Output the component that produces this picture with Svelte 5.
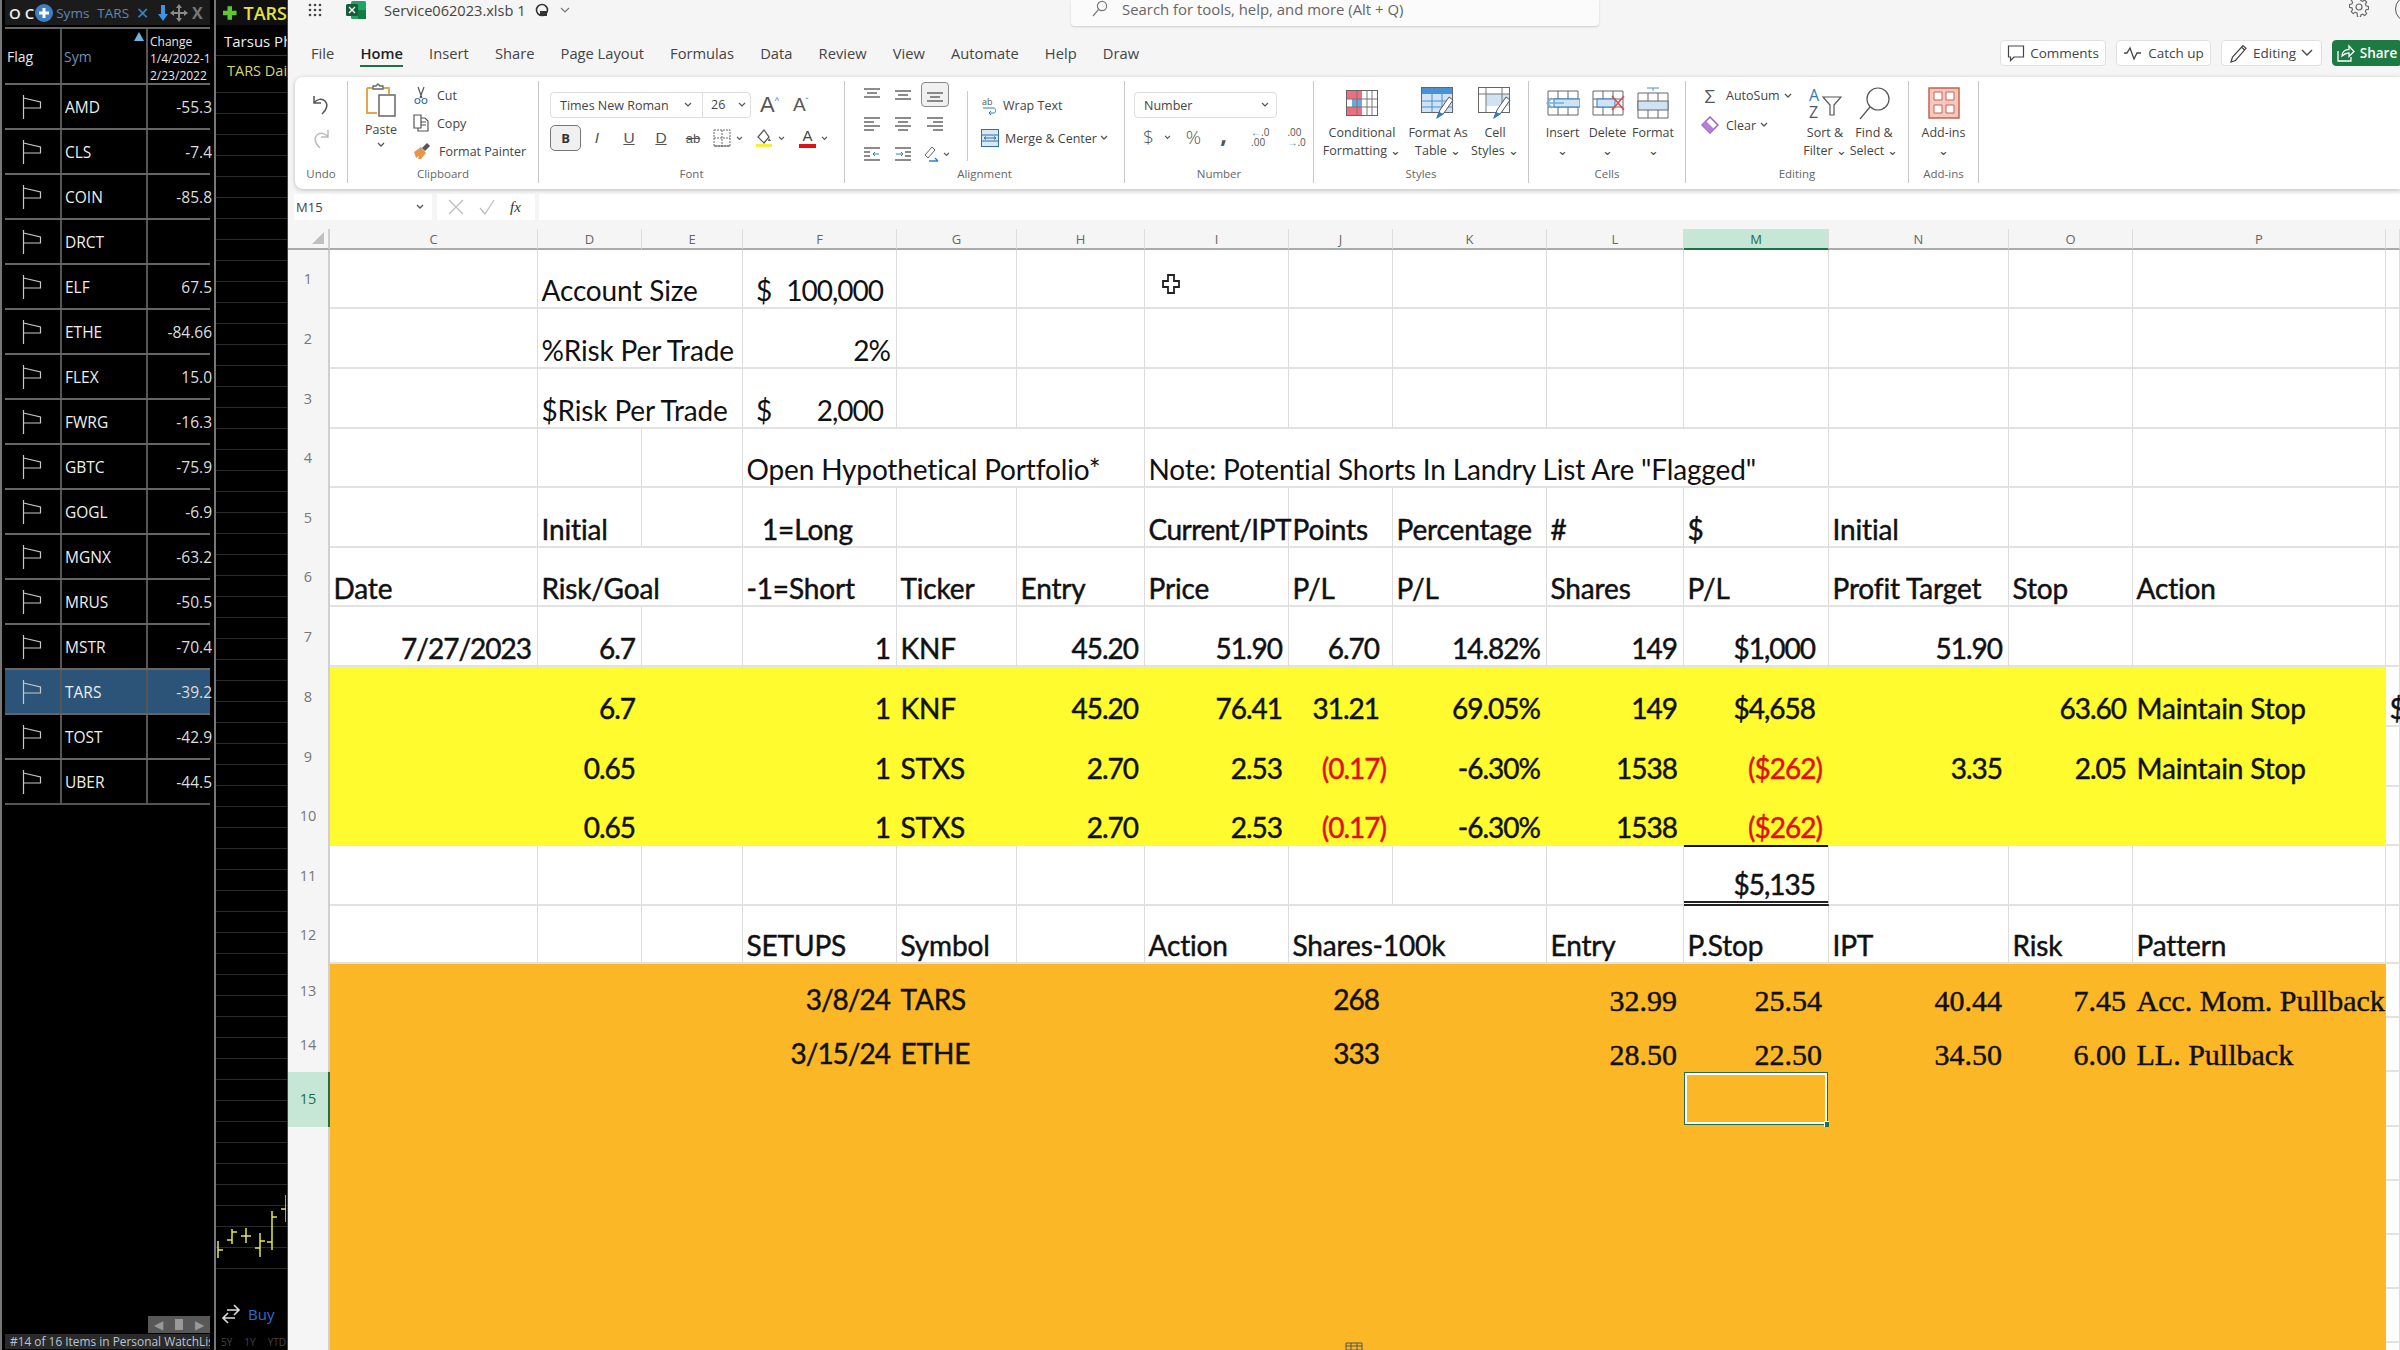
<script>
	const watch = [
		['AMD', '-55.3'], ['CLS', '-7.4'], ['COIN', '-85.8'], ['DRCT', ''],
		['ELF', '67.5'], ['ETHE', '-84.66'], ['FLEX', '15.0'], ['FWRG', '-16.3'],
		['GBTC', '-75.9'], ['GOGL', '-6.9'], ['MGNX', '-63.2'], ['MRUS', '-50.5'],
		['MSTR', '-70.4'], ['TARS', '-39.2'], ['TOST', '-42.9'], ['UBER', '-44.5']
	];
	const menu = ['File', 'Home', 'Insert', 'Share', 'Page Layout', 'Formulas', 'Data', 'Review', 'View', 'Automate', 'Help', 'Draw'];
	const cols = ['C', 'D', 'E', 'F', 'G', 'H', 'I', 'J', 'K', 'L', 'M', 'N', 'O', 'P', 'Q'];

	const L = (text, span = 1, cls = '') => ({ text, span, cls: 'left ' + cls });
	const R = (text, cls = '') => ({ text, span: 1, cls: 'right ' + cls });
	const A = (value) => ({ text: value, span: 1, cls: 'acc', dollar: true });

	const portfolio = (d, tick, entry, price, pts, pct, sh, pl, loss) => ({
		D: R(d), F: R('1'), G: L(tick), H: R(entry), I: R(price),
		J: R(pts, loss ? 'red' : 'pad'), K: R(pct), L: R(sh), M: R(pl, loss ? 'red' : 'pad')
	});

	const rows = [
		{ n: 1, cells: { D: L('Account Size', 2, 'thin'), F: A('100,000') } },
		{ n: 2, cells: { D: L('%Risk Per Trade', 2, 'thin'), F: R('2%', 'thin') } },
		{ n: 3, cells: { D: L('$Risk Per Trade', 2, 'thin'), F: A('2,000') } },
		{ n: 4, cells: { F: L('Open Hypothetical Portfolio*', 3, 'thin'), I: L('Note: Potential Shorts In Landry List Are "Flagged"', 5, 'thin') } },
		{ n: 5, cells: { D: L('Initial'), F: L('1=Long', 1, 'ind'), I: L('Current/IPT', 1, 'tight'), J: L('Points'), K: L('Percentage'), L: L('#'), M: L('$'), N: L('Initial') } },
		{ n: 6, cells: { C: L('Date'), D: L('Risk/Goal', 2), F: L('-1=Short'), G: L('Ticker'), H: L('Entry'), I: L('Price'), J: L('P/L'), K: L('P/L'), L: L('Shares'), M: L('P/L'), N: L('Profit Target'), O: L('Stop'), P: L('Action') } },
		{ n: 7, cells: { C: R('7/27/2023'), ...portfolio('6.7', 'KNF', '45.20', '51.90', '6.70', '14.82%', '149', '$1,000'), N: R('51.90') } },
		{ n: 8, fill: 'yellow', cells: { ...portfolio('6.7', 'KNF', '45.20', '76.41', '31.21', '69.05%', '149', '$4,658'), O: R('63.60'), P: L('Maintain Stop'), Q: L('$') } },
		{ n: 9, fill: 'yellow', cells: { ...portfolio('0.65', 'STXS', '2.70', '2.53', '(0.17)', '-6.30%', '1538', '($262)', true), N: R('3.35'), O: R('2.05'), P: L('Maintain Stop') } },
		{ n: 10, fill: 'yellow', cells: { ...portfolio('0.65', 'STXS', '2.70', '2.53', '(0.17)', '-6.30%', '1538', '($262)', true) } },
		{ n: 11, cells: { M: R('$5,135', 'pad total') } },
		{ n: 12, cells: { F: L('SETUPS'), G: L('Symbol'), I: L('Action'), J: L('Shares-100k', 2), L: L('Entry'), M: L('P.Stop'), N: L('IPT'), O: L('Risk'), P: L('Pattern') } },
		{ n: 13, fill: 'orange', cells: { F: R('3/8/24'), G: L('TARS'), J: R('268', 'pad'), L: R('32.99', 'tnr'), M: R('25.54', 'tnr'), N: R('40.44', 'tnr'), O: R('7.45', 'tnr'), P: L('Acc. Mom. Pullback', 1, 'tnr') } },
		{ n: 14, fill: 'orange', cells: { F: R('3/15/24'), G: L('ETHE'), J: R('333', 'pad'), L: R('28.50', 'tnr'), M: R('22.50', 'tnr'), N: R('34.50', 'tnr'), O: R('6.00', 'tnr'), P: L('LL. Pullback', 1, 'tnr') } },
		{ n: 15, fill: 'orange', cells: { M: { text: '', span: 1, cls: 'sel' } } },
		{ n: '', fill: 'orange', cells: {} },
		{ n: '', fill: 'orange', cells: {} },
		{ n: '', fill: 'orange', cells: {} },
		{ n: '', fill: 'orange', cells: {} },
		{ n: '', fill: 'orange', cells: {} }
	];

	function expand(row) {
		const out = [];
		let i = 0;
		while (i < cols.length) {
			const cell = row.cells[cols[i]] || { text: '', span: 1, cls: '' };
			out.push({ ...cell, col: cols[i], skin: cols[i] === 'Q' ? '' : row.fill || '' });
			i += cell.span;
		}
		return out;
	}
</script>

<div class="page">
	<aside class="watch">
		<div class="wtop">
			<span class="oc">O C</span>
			<svg width="20" height="20" viewBox="0 0 20 20"><circle cx="10" cy="10" r="9" fill="#3f7fc4" /><path d="M10 5v10M5 10h10" stroke="#fff" stroke-width="3" /></svg>
			<span class="syms">Syms</span>
			<span class="syms tk">TARS</span>
			<span class="xb">✕</span>
			<svg class="dn" width="10" height="18" viewBox="0 0 10 18"><path d="M3 1h4v9h3l-5 7-5-7h3z" fill="#3f93e0" /></svg>
			<svg class="mv" width="18" height="18" viewBox="0 0 18 18"><path d="M9 0l3 4h-2v4h4V6l4 3-4 3v-2h-4v4h2l-3 4-3-4h2v-4H4v2L0 9l4-3v2h4V4H6z" fill="#8a8a8a" /></svg>
			<span class="xg">X</span>
		</div>
		<div class="whead">
			<div class="wc hflag">Flag</div>
			<div class="wc hsym">Sym<i class="tri"></i></div>
			<div class="wc hchg">Change<br />1/4/2022-1<br />2/23/2022</div>
		</div>
		{#each watch as [sym, chg]}
			<div class="wrow" class:cur={sym === 'TARS'}>
				<div class="wc flag"><svg width="20" height="26" viewBox="0 0 20 26"><path d="M1.500 1v24M1.500 4l17 4v6h-17" fill="none" stroke="#c8c8c8" stroke-width="1.200" /></svg></div>
				<div class="wc sym">{sym}</div>
				<div class="wc val">{chg}</div>
			</div>
		{/each}
		<div class="wspace"></div>
		<div class="wscroll"><span class="sc">◀</span><span class="sq"></span><span class="sc">▶</span></div>
		<div class="wstatus">#14 of 16 Items in Personal WatchList</div>
	</aside>

	<aside class="chart">
		<div class="ctop"><svg width="18" height="18" viewBox="0 0 18 18"><path d="M6 0h6v6h6v6h-6v6H6v-6H0V6h6z" fill="#5fc72f" /></svg><b>TARS</b></div>
		<div class="cname">Tarsus Pharmaceuticals</div>
		<div class="csub">TARS Daily</div>
		<div class="clines">
			<svg class="bars" width="70" height="70" viewBox="0 0 70 70" fill="none" stroke="#e8e84a" stroke-width="1.500">
				<path d="M2 47v17M2 56h5M16 35v15M11 46h5M16 38h5M30 34v15M25 42h10M44 39v24M39 54h5M44 47h5M56 17v39M51 48h5M56 23h5M70 1v27M65 15h5" />
			</svg>
		</div>
		<div class="cfoot">
			<div class="buy">
				<svg width="22" height="22" viewBox="0 0 22 22" fill="none" stroke="#ddd" stroke-width="1.600"><path d="M7 7h11M14 2l5 5-5 5M15 15H4M8 10l-5 5 5 5" /></svg>
				<span>Buy</span>
			</div>
			<div class="range"><span>5Y</span><span>1Y</span><span>YTD</span><span>6</span></div>
		</div>
	</aside>

	<main class="xl">
		<div class="titlebar">
			<div class="tleft">
				<svg class="waffle" width="14" height="14" viewBox="0 0 14 14" fill="#444"><circle cx="2" cy="2" r="1.300" /><circle cx="7" cy="2" r="1.300" /><circle cx="12" cy="2" r="1.300" /><circle cx="2" cy="7" r="1.300" /><circle cx="7" cy="7" r="1.300" /><circle cx="12" cy="7" r="1.300" /><circle cx="2" cy="12" r="1.300" /><circle cx="7" cy="12" r="1.300" /><circle cx="12" cy="12" r="1.300" /></svg>
				<svg class="xlicon" width="20" height="18" viewBox="0 0 20 18"><rect x="5" y="0" width="15" height="18" rx="1.500" fill="#21a366" /><rect x="12" y="9" width="8" height="9" fill="#107c41" /><rect x="0" y="3" width="12" height="12" rx="1.500" fill="#185c37" /><path d="M3 6l6 6M9 6l-6 6" stroke="#fff" stroke-width="1.400" /></svg>
				<span class="fname">Service062023.xlsb 1</span>
				<svg class="sync" width="16" height="16" viewBox="0 0 16 16"><circle cx="8" cy="8" r="5.500" fill="none" stroke="#333" stroke-width="1.600" /><path d="M6 9h7v5H6z" fill="#333" /></svg>
				<svg class="chev" width="10" height="6" viewBox="0 0 10 6"><path d="M1 1l4 4 4-4" fill="none" stroke="#777" stroke-width="1.200" /></svg>
			</div>
			<div class="search">
				<svg width="18" height="18" viewBox="0 0 18 18" fill="none" stroke="#777" stroke-width="1.200"><circle cx="11" cy="6" r="4.600" /><path d="M7.600 9.400L2 16" /></svg>
				<span>Search for tools, help, and more (Alt + Q)</span>
			</div>
			<div class="tright">
				<svg width="20" height="20" viewBox="0 0 20 20" fill="none" stroke="#666" stroke-width="1.200"><circle cx="10" cy="10" r="3" /><path d="M8.500 1h3l.5 2.600 1.800.8 2.300-1.400 2 2.100-1.400 2.200.8 1.800 2.500.6v3l-2.500.5-.8 1.800 1.400 2.200-2 2-2.300-1.300-1.800.7-.5 2.600h-3L8 16.600l-1.800-.7L3.900 17.200l-2-2 1.400-2.200-.8-1.800L0 10.700v-3l2.500-.6.800-1.800L1.900 3.100l2-2.100 2.300 1.400 1.800-.8z" transform="scale(.95) translate(.5 .2)" /></svg>
				<i class="avatar"></i>
			</div>
		</div>

		<div class="menubar">
			{#each menu as m}
				<span class="mi" class:act={m === 'Home'}>{m}</span>
			{/each}
			<div class="acts">
				<span class="btn comments"><svg width="18" height="18" viewBox="0 0 18 18" fill="none" stroke="#444" stroke-width="1.200"><path d="M1.500 2h15v11H7l-3.500 3.500V13h-2z" /></svg>Comments</span>
				<span class="btn catch"><svg width="20" height="14" viewBox="0 0 20 14" fill="none" stroke="#444" stroke-width="1.300"><path d="M1 7h3l3-5 4 11 3-6h4" /></svg>Catch up</span>
				<span class="btn editing"><svg width="18" height="20" viewBox="0 0 18 20" fill="none" stroke="#444" stroke-width="1.200"><path d="M1 19l1.500-5L13 2.500l3 2.800L5.500 17.500zM11.500 4l3 3" /></svg>Editing<svg width="12" height="7" viewBox="0 0 12 7" fill="none" stroke="#444" stroke-width="1.300"><path d="M1 1l5 5 5-5" /></svg></span>
				<span class="btn share"><svg width="18" height="18" viewBox="0 0 18 18" fill="none" stroke="#fff" stroke-width="1.300"><path d="M1 7v10h13v-4M5 12c0-4 3-6.500 7-6.500V2l5 5.500-5 5V9c-3 0-5 1-7 3z" /></svg>Share</span>
			</div>
		</div>

		<div class="ribbon">
			<section class="grp g-undo">
				<div class="gbody undo">
					<svg width="22" height="24" viewBox="0 0 22 24" fill="none" stroke="#555" stroke-width="1.500"><path d="M4 3v7h7M4 10c3-4 8-5 11-2 3 3 2.500 8-3 13" /></svg>
					<svg width="22" height="24" viewBox="0 0 22 24" fill="none" stroke="#bbb" stroke-width="1.500"><path d="M18 3v7h-7M18 10c-3-4-8-5-11-2-3 3-2.500 8 3 13" /></svg>
				</div>
				<div class="glabel">Undo</div>
			</section>

			<section class="grp g-clip">
				<div class="gbody clip">
					<div class="paste">
						<svg width="32" height="34" viewBox="0 0 32 34" fill="none"><path d="M2 5h6M18 5h6v6M2 5v25h10" stroke="#e3a74a" stroke-width="2" /><path d="M8 6V3h3l2-2 2 2h3v3z" stroke="#666" stroke-width="1.300" fill="#fff" /><rect x="14" y="12" width="16" height="21" fill="#fff" stroke="#666" stroke-width="1.500" /></svg>
						<span>Paste</span>
						<svg width="8" height="6" viewBox="0 0 8 6"><path d="M1 1l3 3 3-3" fill="none" stroke="#555" stroke-width="1.300" /></svg>
					</div>
					<div class="smalls">
						<div class="sm"><svg width="16" height="18" viewBox="0 0 16 18" fill="none" stroke="#555" stroke-width="1.200"><path d="M5 1l4 11M11 1L7 12" /><circle cx="4.500" cy="15" r="2.500" stroke="#3a78b5" /><circle cx="11.500" cy="15" r="2.500" stroke="#3a78b5" /></svg>Cut</div>
						<div class="sm"><svg width="16" height="18" viewBox="0 0 16 18" fill="none" stroke="#555" stroke-width="1.200"><path d="M1 1h7v13H1zM8 4h4l3 3v10H5v-3" /><path d="M8 8h5M8 11h5" /></svg>Copy</div>
						<div class="sm"><svg width="18" height="18" viewBox="0 0 18 18"><path d="M1 10l7-5 5 6-5 6H5l1-3-3 2z" fill="#e8944a" /><path d="M9 6l5-5 3 3-5 5z" fill="#555" /></svg>Format Painter</div>
					</div>
				</div>
				<div class="glabel">Clipboard</div>
			</section>

			<section class="grp g-font">
				<div class="gbody font">
					<div class="frow">
						<div class="box fontbox">
							<span class="fn">Times New Roman</span><svg width="8" height="6" viewBox="0 0 8 6"><path d="M1 1l3 3 3-3" fill="none" stroke="#555" stroke-width="1.200" /></svg>
							<span class="fs">26</span><svg width="8" height="6" viewBox="0 0 8 6"><path d="M1 1l3 3 3-3" fill="none" stroke="#555" stroke-width="1.200" /></svg>
						</div>
						<span class="grow">A<sup>^</sup></span>
						<span class="grow sm2">A<sup>ˇ</sup></span>
					</div>
					<div class="frow fmt">
						<span class="bold">B</span>
						<span class="ti it">I</span>
						<span class="ti un">U</span>
						<span class="ti un dbl">D</span>
						<span class="ti st">ab</span>
						<svg width="18" height="18" viewBox="0 0 18 18" fill="none" stroke="#666"><path d="M1 1h16v16H1zM9 1v16M1 9h16" stroke-dasharray="2 1" /><path d="M1 17h16" /></svg>
						<svg class="mini" width="7" height="5" viewBox="0 0 8 6"><path d="M1 1l3 3 3-3" fill="none" stroke="#555" stroke-width="1.400" /></svg>
						<svg class="paint" width="18" height="20" viewBox="0 0 18 20"><path d="M3 9l6-7 5 7-5 6z" fill="none" stroke="#555" stroke-width="1.200" /><path d="M14 10l2 3h-3z" fill="#555" /><rect x="1" y="16" width="16" height="3" fill="#f8ef3a" /></svg>
						<svg class="mini" width="7" height="5" viewBox="0 0 8 6"><path d="M1 1l3 3 3-3" fill="none" stroke="#555" stroke-width="1.400" /></svg>
						<span class="acolor">A</span>
						<svg class="mini" width="7" height="5" viewBox="0 0 8 6"><path d="M1 1l3 3 3-3" fill="none" stroke="#555" stroke-width="1.400" /></svg>
					</div>
				</div>
				<div class="glabel">Font</div>
			</section>

			<section class="grp g-align">
				<div class="gbody align">
					<div class="agrid">
						<span class="ai"><svg width="16" height="14" viewBox="0 0 16 14"><path d="M0 1h16M3 5h10M0 9h16" stroke="#666" stroke-width="1.300" /></svg></span>
						<span class="ai"><svg width="16" height="14" viewBox="0 0 16 14"><path d="M0 3h16M3 7h10M0 11h16" stroke="#666" stroke-width="1.300" /></svg></span>
						<span class="ai on"><svg width="16" height="14" viewBox="0 0 16 14"><path d="M0 5h16M3 9h10M0 13h16" stroke="#666" stroke-width="1.300" /></svg></span>
						<span class="ai"><svg width="16" height="14" viewBox="0 0 16 14"><path d="M0 1h16M0 5h10M0 9h16M0 13h10" stroke="#666" stroke-width="1.300" /></svg></span>
						<span class="ai"><svg width="16" height="14" viewBox="0 0 16 14"><path d="M0 1h16M3 5h10M0 9h16M3 13h10" stroke="#666" stroke-width="1.300" /></svg></span>
						<span class="ai"><svg width="16" height="14" viewBox="0 0 16 14"><path d="M0 1h16M6 5h10M0 9h16M6 13h10" stroke="#666" stroke-width="1.300" /></svg></span>
						<span class="ai"><svg width="16" height="14" viewBox="0 0 16 14"><path d="M0 1h16M0 13h16M0 5h6M0 9h6" stroke="#666" stroke-width="1.300" /><path d="M15 7H9M11 5L9 7l2 2" stroke="#2f7fc4" fill="none" /></svg></span>
						<span class="ai"><svg width="16" height="14" viewBox="0 0 16 14"><path d="M0 1h16M0 13h16M10 5h6M10 9h6" stroke="#666" stroke-width="1.300" /><path d="M1 7h7M6 5l2 2-2 2" stroke="#2f7fc4" fill="none" /></svg></span>
						<span class="ai wide"><svg width="18" height="18" viewBox="0 0 18 18" fill="none"><path d="M2 10l7-8 3 3-7 8z" stroke="#666" /><path d="M6 16h9M15 16l-3-3" stroke="#2f7fc4" stroke-width="1.300" /></svg><svg width="7" height="5" viewBox="0 0 8 6"><path d="M1 1l3 3 3-3" fill="none" stroke="#555" stroke-width="1.400" /></svg></span>
					</div>
					<div class="awrap">
						<div class="sm"><svg width="16" height="18" viewBox="0 0 16 18" fill="none"><text x="1" y="8" font-size="9" font-family="Open Sans" fill="#555">ab</text><path d="M2 11h11c2 0 2 5 0 5H8M10 14l-2 2 2 2" stroke="#2f7fc4" /></svg>Wrap Text</div>
						<div class="sm"><svg width="18" height="18" viewBox="0 0 18 18" fill="none"><rect x=".5" y=".5" width="17" height="17" fill="#d8e8f5" stroke="#2f6fa8" /><path d="M1 6h16M1 12h16" stroke="#2f6fa8" /><path d="M3 9h12M5 7.500L3 9l2 1.500M13 7.500L15 9l-2 1.500" stroke="#2f6fa8" /></svg>Merge &amp; Center<svg class="mini" width="8" height="6" viewBox="0 0 8 6"><path d="M1 1l3 3 3-3" fill="none" stroke="#555" stroke-width="1.300" /></svg></div>
					</div>
				</div>
				<div class="glabel">Alignment</div>
			</section>

			<section class="grp g-num">
				<div class="gbody num">
					<div class="box numbox"><span>Number</span><svg width="8" height="6" viewBox="0 0 8 6"><path d="M1 1l3 3 3-3" fill="none" stroke="#555" stroke-width="1.200" /></svg></div>
					<div class="nrow">
						<span class="dol">$</span>
						<svg width="7" height="5" viewBox="0 0 8 6"><path d="M1 1l3 3 3-3" fill="none" stroke="#555" stroke-width="1.400" /></svg>
						<span class="pct">%</span>
						<span class="cma">,</span>
						<span class="dec"><b>←</b>.0<br />.00</span>
						<span class="dec">.00<br /><b>→</b>.0</span>
					</div>
				</div>
				<div class="glabel">Number</div>
			</section>

			<section class="grp g-styles">
				<div class="gbody big">
					<div class="bb w96">
						<svg width="32" height="26" viewBox="0 0 32 26"><rect x=".5" y=".5" width="31" height="25" fill="#fff" stroke="#666" /><path d="M1 1h15v8H1zM1 17h15v8H1z" fill="#f06c7e" /><rect x="6" y="9" width="10" height="8" fill="#6ba7dc" /><path d="M11 1v24M21 1v24M26 1v24M1 9h30M1 17h30" stroke="#777" /></svg>
						<span>Conditional<br />Formatting ⌄</span>
					</div>
					<div class="bb w56">
						<svg width="34" height="32" viewBox="0 0 34 32"><rect x=".5" y=".5" width="31" height="25" fill="#cfe3f5" stroke="#666" /><rect x="1" y="1" width="30" height="6" fill="#4a90d4" /><path d="M1 14h30M1 20h30M11 7v18M21 7v18" stroke="#4a90d4" /><path d="M16 31l3-8 9-13 4 3-9 13z" fill="#fff" stroke="#555" /><path d="M15 32l3-7 5 2z" fill="#2f7fc4" /></svg>
						<span>Format As<br />Table ⌄</span>
					</div>
					<div class="bb w58">
						<svg width="34" height="32" viewBox="0 0 34 32"><rect x=".5" y=".5" width="31" height="25" fill="#fff" stroke="#666" /><rect x="8" y="7" width="23" height="12" fill="#cfe3f5" /><path d="M1 7h30M8 1v24M24 1v24" stroke="#777" /><path d="M16 31l3-8 9-13 4 3-9 13z" fill="#fff" stroke="#555" /><path d="M15 32l3-7 5 2z" fill="#2f7fc4" /></svg>
						<span>Cell<br />Styles ⌄</span>
					</div>
				</div>
				<div class="glabel">Styles</div>
			</section>

			<section class="grp g-cells">
				<div class="gbody big">
					<div class="bb w45">
						<svg width="34" height="26" viewBox="0 0 34 26"><path d="M2 1h30v24H2zM12 1v24M22 1v24M2 9h30M2 17h30" fill="none" stroke="#666" /><rect x="8" y="9" width="26" height="8" fill="#cfe3f5" stroke="#2f7fc4" /><path d="M18 13H1M6 8l-5 5 5 5" fill="none" stroke="#6ab0e8" stroke-width="1.500" /></svg>
						<span>Insert<br />⌄</span>
					</div>
					<div class="bb w45">
						<svg width="34" height="26" viewBox="0 0 34 26"><path d="M2 1h30v24H2zM12 1v24M22 1v24M2 9h30M2 17h30" fill="none" stroke="#666" /><rect x="6" y="9" width="18" height="8" fill="#cfe3f5" stroke="#2f7fc4" /><path d="M21 6l12 14M33 6L21 20" stroke="#e04848" stroke-width="1.500" /></svg>
						<span>Delete<br />⌄</span>
					</div>
					<div class="bb w46">
						<svg width="32" height="32" viewBox="0 0 32 32"><path d="M10 1h12M16 1v3" stroke="#4a90d4" /><path d="M1 6h30v25H1zM11 6v25M21 6v25" fill="none" stroke="#666" /><rect x="1" y="14" width="30" height="9" fill="#cfe3f5" stroke="#666" /></svg>
						<span>Format<br />⌄</span>
					</div>
				</div>
				<div class="glabel">Cells</div>
			</section>

			<section class="grp g-edit">
				<div class="gbody edit">
					<div class="smalls two">
						<div class="sm"><span class="sigma">Σ</span>AutoSum<svg class="mini" width="8" height="6" viewBox="0 0 8 6"><path d="M1 1l3 3 3-3" fill="none" stroke="#555" stroke-width="1.300" /></svg></div>
						<div class="sm"><svg width="18" height="18" viewBox="0 0 18 18" fill="none"><path d="M9 1l8 8-8 8-8-8z" stroke="#9c5fc0" stroke-width="1.500" /><path d="M5 5l8 8-4 4-8-8z" fill="#b77ed8" /></svg>Clear<svg class="mini" width="8" height="6" viewBox="0 0 8 6"><path d="M1 1l3 3 3-3" fill="none" stroke="#555" stroke-width="1.300" /></svg></div>
					</div>
					<div class="bb w48">
						<svg width="34" height="32" viewBox="0 0 34 32" fill="none"><text x="1" y="14" font-size="16" font-family="Open Sans" fill="#3a78b5">A</text><text x="1" y="31" font-size="16" font-family="Open Sans" fill="#555">Z</text><path d="M15 10h18l-7 8v10h-4V18z" stroke="#555" stroke-width="1.200" /></svg>
						<span>Sort &amp;<br />Filter ⌄</span>
					</div>
					<div class="bb w50">
						<svg width="34" height="34" viewBox="0 0 34 34" fill="none" stroke="#555" stroke-width="1.200"><circle cx="21" cy="13" r="11" /><path d="M13 21L3 33" /></svg>
						<span>Find &amp;<br />Select ⌄</span>
					</div>
				</div>
				<div class="glabel">Editing</div>
			</section>

			<section class="grp g-add">
				<div class="gbody big">
					<div class="bb w70">
						<svg width="32" height="32" viewBox="0 0 32 32"><rect x="1" y="1" width="30" height="30" fill="#f4c7bf" stroke="#c9604f" stroke-width="1.500" /><path d="M6 5h8v8H6zM18 5h8v8h-8zM6 18h8v8H6zM18 18h8v8h-8z" fill="#fff" stroke="#c9604f" /></svg>
						<span>Add-ins<br />⌄</span>
					</div>
				</div>
				<div class="glabel">Add-ins</div>
			</section>
		</div>

		<div class="fbar">
			<div class="namebox"><span>M15</span><svg width="8" height="6" viewBox="0 0 8 6"><path d="M1 1l3 3 3-3" fill="none" stroke="#555" stroke-width="1.300" /></svg></div>
			<div class="fxbox">
				<svg width="16" height="16" viewBox="0 0 16 16" fill="none" stroke="#bbb" stroke-width="1.200"><path d="M1 1l14 14M15 1L1 15" /></svg>
				<svg width="16" height="16" viewBox="0 0 16 16" fill="none" stroke="#bbb" stroke-width="1.200"><path d="M1 9l5 6L15 1" /></svg>
				<i>fx</i>
			</div>
			<div class="finput"></div>
		</div>

		<div class="sheet">
			<div class="corner"><svg width="12" height="12" viewBox="0 0 12 12"><path d="M12 0v12H0z" fill="#c0c0c0" /></svg></div>
			{#each cols as c}
				<div class="ch" class:on={c === 'M'}>{c === 'Q' ? '' : c}</div>
			{/each}
			{#each rows as r}
				<div class="rn" class:on={r.n === 15}>{r.n}</div>
				{#each expand(r) as cell}
					<div class="c {cell.cls} {cell.skin}" style:grid-column={cell.span > 1 ? `span ${cell.span}` : null}>
						{#if cell.dollar}<span>$</span>{/if}
						<span>{cell.text}</span>
					</div>
				{/each}
			{/each}
			<svg class="cursor" width="18" height="20" viewBox="0 0 18 20"><path d="M6 1h6v6h5v6h-5v6H6v-6H1V7h5z" fill="#fff" stroke="#222" stroke-width="1.800" /></svg>
			<svg class="mouse" width="18" height="8" viewBox="0 0 18 8" fill="none" stroke="#555"><path d="M1 1h16v7H1zM6 1v7M12 1v7M1 4h16" /></svg>
		</div>
	</main>
</div>

<style>
	:global(body) {
		margin: 0;
		background: #000;
	}

	.page {
		width: 2400px;
		height: 1350px;
		display: flex;
		overflow: hidden;
		font-family: 'Open Sans', sans-serif;
	}

	/* watchlist */
	.watch {
		width: 214px;
		flex: none;
		box-sizing: border-box;
		border-left: 2px solid #777;
		padding-left: 3px;
		padding-right: 4px;
		background: #000;
		color: #e8e8e8;
		display: flex;
		flex-direction: column;
	}

	.wtop {
		height: 25px;
		background: #1b1b1b;
		display: flex;
		align-items: center;
		font-size: 14px;
		margin-bottom: 2px;
		overflow: hidden;
		white-space: nowrap;
	}

	.oc {
		margin-left: 4px;
		margin-right: 0;
		font-weight: 600;
		font-size: 15px;
		color: #eee;
	}

	.syms {
		color: #5f88b5;
		margin-left: 2px;
		font-size: 13.500px;
	}

	.tk {
		margin-left: 8px;
	}

	.xb {
		color: #3b82c8;
		margin-left: 7px;
		font-size: 16px;
	}

	.dn {
		margin-left: 9px;
	}

	.mv {
		margin-left: 2px;
	}

	.xg {
		color: #777;
		font-weight: 700;
		font-size: 16px;
		margin-left: 4px;
	}

	.whead,
	.wrow {
		display: grid;
		grid-template-columns: 57px 86px 64px;
		border-top: 2px solid #666;
		box-sizing: border-box;
	}

	.whead {
		height: 56px;
	}

	.wrow {
		height: 45px;
		font-size: 15.500px;
		font-weight: 500;
	}

	.wrow.cur {
		background: #2c5478;
	}

	.wc {
		border-right: 2px solid #555;
		display: flex;
		align-items: center;
		position: relative;
		box-sizing: border-box;
		overflow: hidden;
	}

	.wc:last-child {
		border-right: 0;
	}

	.hflag {
		font-size: 14px;
		padding-left: 2px;
		font-weight: 500;
	}

	.hsym {
		font-size: 14px;
		color: #6b93bd;
		padding-left: 2px;
		font-weight: 500;
	}

	.tri {
		position: absolute;
		right: 2px;
		top: 3px;
		border: 5.500px solid transparent;
		border-top: 0;
		border-bottom: 9px solid #6fb6df;
	}

	.hchg {
		display: block;
		font-size: 12px;
		line-height: 17px;
		padding: 4px 0 0 2px;
		white-space: nowrap;
		font-weight: 500;
	}

	.flag {
		justify-content: flex-start;
		padding-left: 17px;
	}

	.sym {
		padding-left: 3px;
		color: #eee;
	}

	.val {
		justify-content: flex-end;
		color: #ddd;
	}

	.wspace {
		flex: 1;
		border-top: 2px solid #555;
	}

	.wscroll {
		align-self: flex-end;
		width: 62px;
		height: 17px;
		background: #585858;
		display: flex;
		align-items: center;
		justify-content: space-around;
		color: #999;
		font-size: 12px;
		margin-bottom: 1px;
	}

	.sq {
		width: 8px;
		height: 11px;
		background: #999;
	}

	.wstatus {
		height: 15px;
		background: #2a2a2a;
		color: #b6c6d8;
		font-size: 11.900px;
		line-height: 15px;
		padding-left: 5px;
		margin-bottom: 1px;
		white-space: nowrap;
		overflow: hidden;
	}

	/* chart strip */
	.chart {
		width: 74px;
		flex: none;
		box-sizing: border-box;
		border-left: 2px solid #777;
		border-right: 1px solid #444;
		background: #000;
		display: flex;
		flex-direction: column;
		overflow: hidden;
		white-space: nowrap;
	}

	.ctop {
		height: 25px;
		display: flex;
		align-items: center;
		gap: 7px;
		padding-left: 7px;
		background: #101010;
	}

	.ctop b {
		color: #e7e23c;
		font-size: 18px;
		font-weight: 600;
	}

	.cname {
		height: 30px;
		line-height: 32px;
		border-bottom: 1px solid #333;
		color: #eee;
		font-size: 15px;
		padding-left: 8px;
	}

	.csub {
		height: 36px;
		line-height: 30px;
		color: #d8d66a;
		font-size: 14.500px;
		padding-left: 11px;
	}

	.clines {
		flex: 1;
		position: relative;
		background: repeating-linear-gradient(#2a2a2a 0 1px, #000 1px 21px);
	}

	.bars {
		position: absolute;
		left: 0;
		bottom: 12px;
	}

	.cfoot {
		height: 74px;
		display: flex;
		flex-direction: column;
		justify-content: flex-end;
	}

	.buy {
		display: flex;
		align-items: center;
		gap: 6px;
		color: #2a6fd8;
		font-size: 15px;
		margin-bottom: 10px;
		padding-left: 4px;
	}

	.range {
		display: flex;
		gap: 12px;
		color: #444;
		font-size: 10px;
		padding-left: 5px;
		margin-bottom: 1px;
	}

	/* excel */
	.xl {
		flex: 1;
		min-width: 0;
		background: #f5f5f5;
		display: flex;
		flex-direction: column;
		color: #444;
	}

	.titlebar {
		height: 28px;
		flex: none;
		display: flex;
		font-size: 14px;
	}

	.tleft {
		width: 783px;
		display: flex;
		align-items: center;
		height: 19px;
	}

	.waffle {
		margin-left: 20px;
	}

	.xlicon {
		margin-left: 24px;
	}

	.fname {
		margin-left: 18px;
		font-size: 14.600px;
		color: #444;
	}

	.sync {
		margin-left: 8px;
	}

	.chev {
		margin-left: 10px;
	}

	.search {
		width: 528px;
		height: 26px;
		background: #fbfbfb;
		box-shadow: 0 1px 2px #ccc;
		border-radius: 0 0 4px 4px;
		display: flex;
		align-items: center;
		gap: 13px;
		padding-left: 20px;
		box-sizing: border-box;
		color: #666;
		font-size: 14.900px;
		padding-bottom: 8px;
	}

	.tright {
		margin-left: auto;
		display: flex;
		align-items: flex-start;
		gap: 26px;
		margin-right: -21px;
	}

	.tright svg {
		margin-top: -3px;
	}

	.avatar {
		display: block;
		width: 24px;
		height: 24px;
		margin-top: -4px;
		border: 1.500px solid #555;
		border-radius: 50%;
	}

	.menubar {
		height: 49px;
		flex: none;
		display: flex;
		align-items: center;
		gap: 26.200px;
		padding-left: 23px;
		font-size: 14.700px;
	}

	.mi {
		position: relative;
		white-space: nowrap;
	}

	.mi.act {
		font-weight: 600;
		color: #222;
	}

	.mi.act::after {
		content: '';
		position: absolute;
		left: 0;
		right: 0;
		bottom: -4px;
		height: 2px;
		background: #1e7145;
	}

	.acts {
		margin-left: auto;
		display: flex;
		gap: 10px;
		margin-right: -2px;
	}

	.btn {
		height: 26px;
		box-sizing: border-box;
		background: #fff;
		border: 1px solid #e0e0e0;
		border-radius: 4px;
		display: flex;
		align-items: center;
		justify-content: center;
		gap: 5px;
		font-size: 13.500px;
		white-space: nowrap;
	}

	.comments {
		width: 106px;
	}

	.catch {
		width: 95px;
	}

	.editing {
		width: 101px;
	}

	.share {
		width: 70px;
		background: #1e7a43;
		border-color: #1e7a43;
		color: #fff;
		font-weight: 600;
	}

	.ribbon {
		height: 112px;
		flex: none;
		margin-left: 7px;
		box-sizing: border-box;
		background: #fff;
		border-radius: 8px 0 0 8px;
		box-shadow: 0 1px 4px #bbb;
		padding: 4px 0 6px;
		display: flex;
		font-size: 12.500px;
		white-space: nowrap;
	}

	.grp {
		box-sizing: border-box;
		border-right: 1px solid #c8c8c8;
		display: flex;
		flex-direction: column;
		flex: none;
	}

	.gbody {
		flex: 1;
		min-height: 0;
		display: flex;
	}

	.glabel {
		height: 18px;
		text-align: center;
		font-size: 11.500px;
		line-height: 18px;
		color: #666;
	}

	.g-undo { width: 53px; }
	.g-clip { width: 191px; }
	.g-font { width: 306px; }
	.g-align { width: 280px; }
	.g-num { width: 189px; }
	.g-styles { width: 215px; }
	.g-cells { width: 157px; }
	.g-edit { width: 223px; }
	.g-add { width: 70px; }

	.undo {
		flex-direction: column;
		align-items: center;
		gap: 10px;
		padding-top: 12px;
	}

	.clip {
		padding-left: 13px;
	}

	.paste {
		width: 40px;
		display: flex;
		flex-direction: column;
		align-items: center;
		padding-top: 2px;
		gap: 4px;
	}

	.smalls {
		display: flex;
		flex-direction: column;
		margin-left: 12px;
	}

	.sm {
		height: 29.500px;
		display: flex;
		align-items: center;
		gap: 8px;
	}

	.mini {
		margin-left: -3px;
	}

	.font {
		flex-direction: column;
		padding: 11px 0 0 11px;
		gap: 7px;
	}

	.frow {
		display: flex;
		align-items: center;
	}

	.box {
		box-sizing: border-box;
		height: 26px;
		border: 1px solid #ddd;
		border-radius: 4px;
		display: flex;
		align-items: center;
	}

	.fontbox {
		width: 201px;
	}

	.fn {
		width: 132px;
		padding-left: 9px;
		box-sizing: border-box;
	}

	.fontbox svg:first-of-type {
		margin-right: 10px;
		width: 10px;
	}

	.fs {
		border-left: 1px solid #ddd;
		width: 36px;
		line-height: 24px;
		padding-left: 8px;
		box-sizing: border-box;
		margin-left: -1px;
	}

	.grow {
		font-size: 22px;
		font-family: 'Liberation Sans', sans-serif;
		line-height: 24px;
		margin-left: 9px;
		color: #555;
		font-weight: 300;
	}

	.grow.sm2 {
		font-size: 19px;
		margin-left: 14px;
	}

	.grow sup {
		font-size: 9px;
		color: #3a78b5;
		line-height: 0;
	}

	.fmt {
		gap: 8px;
	}

	.fmt > :global(svg) {
		flex: none;
	}

	.bold {
		box-sizing: border-box;
		width: 31px;
		height: 26px;
		border: 1px solid #777;
		border-radius: 5px;
		background: #f0f0f0;
		display: flex;
		align-items: center;
		justify-content: center;
		font-weight: 700;
		font-size: 13px;
		color: #333;
	}

	.ti {
		width: 24px;
		text-align: center;
		font-size: 15.500px;
		color: #555;
		font-family: 'Liberation Sans', sans-serif;
	}

	.it {
		font-style: italic;
		margin-left: -4px;
	}

	.un {
		text-decoration: underline;
	}

	.st {
		text-decoration: line-through;
		font-size: 13px;
	}

	.paint {
		margin-left: 4px;
	}

	.acolor {
		font-size: 15px;
		line-height: 16px;
		width: 17px;
		text-align: center;
		border-bottom: 4px solid #e0101a;
		margin-left: 6px;
		font-family: 'Liberation Sans', sans-serif;
	}

	.align {
		padding: 0 0 0 11px;
	}

	.agrid {
		display: grid;
		grid-template-columns: repeat(3, 31.500px);
		grid-template-rows: 28px 30px 30px;
		width: 110px;
	}

	.ai {
		display: flex;
		align-items: center;
		justify-content: center;
		gap: 2px;
	}

	.ai.on {
		height: 25px;
		margin-top: 1px;
		width: 28px;
		margin-left: 2px;
		box-sizing: border-box;
		border: 1px solid #888;
		border-radius: 4px;
		background: #f0f0f0;
	}

	.ai.wide {
		margin-left: 4px;
	}

	.awrap {
		margin-top: 10px;
		border-left: 1px solid #ccc;
		height: 70px;
		margin-left: 1px;
		display: flex;
		flex-direction: column;
		gap: 3px;
		padding-left: 13px;
	}

	.awrap .sm {
		gap: 6px;
	}

	.num {
		flex-direction: column;
		padding: 11px 0 0 9px;
	}

	.numbox {
		width: 143px;
		padding: 0 7px 0 9px;
		justify-content: space-between;
	}

	.nrow {
		display: flex;
		align-items: center;
		height: 38px;
		padding-left: 9px;
		gap: 10px;
		color: #555;
	}

	.dol,
	.pct {
		font-size: 19px;
		font-weight: 300;
	}

	.pct {
		margin-left: 5px;
	}

	.cma {
		font-size: 24px;
		font-weight: 700;
		line-height: 16px;
		padding: 0 9px;
		margin-top: -6px;
	}

	.dec {
		font-size: 10px;
		line-height: 10px;
		margin-left: 5px;
	}

	.dec + .dec {
		margin-left: 8px;
	}

	.dec b {
		color: #2f7fc4;
		font-weight: 400;
	}

	.big,
	.edit {
		padding-top: 5px;
	}

	.g-cells .big {
		padding-left: 11px;
	}

	.bb {
		display: flex;
		flex-direction: column;
		align-items: center;
		text-align: center;
		line-height: 18px;
		flex: none;
	}

	.bb > svg {
		height: 34px;
		margin-bottom: 4px;
		flex: none;
	}

	.w96 { width: 96px; }
	.w56 { width: 56px; }
	.w58 { width: 58px; }
	.w45 { width: 45px; }
	.w46 { width: 46px; }
	.w48 { width: 48px; }
	.w50 { width: 50px; }
	.w70 { width: 69px; }

	.edit {
		padding-left: 15px;
	}

	.two {
		margin-left: 0;
		width: 100px;
		flex: none;
		margin-top: -5px;
	}

	.two .sm {
		gap: 7px;
	}

	.sigma {
		font-size: 19px;
		width: 18px;
		text-align: center;
		color: #555;
	}

	.fbar {
		height: 40px;
		flex: none;
		box-sizing: border-box;
		padding: 5px 0 9px 6px;
		display: flex;
		gap: 5px;
		font-size: 13px;
	}

	.namebox,
	.fxbox,
	.finput {
		background: #fff;
		display: flex;
		align-items: center;
	}

	.namebox {
		width: 138px;
		box-sizing: border-box;
		padding: 0 8px 0 2px;
		justify-content: space-between;
	}

	.fxbox {
		width: 98px;
		gap: 15px;
		padding-left: 11px;
		box-sizing: border-box;
	}

	.fxbox i {
		font-family: 'Liberation Serif', serif;
		font-size: 15px;
		color: #333;
	}

	.finput {
		flex: 1;
		margin-left: -1px;
	}

	/* sheet */
	.sheet {
		flex: 1;
		min-height: 0;
		position: relative;
		overflow: hidden;
		display: grid;
		grid-template-columns: 42px 208px 104px 101px 154px 120px 128px 144px 104px 154px 137px 145px 180px 124px 253px 14px;
		grid-template-rows: 21px 59px 60px 60px 59px 60px 59px 60px 60px 60px 59px 60px 58px 54px 54px 55px 54px 54px 54px 54px 54px;
		background: #fff;
		color: #111;
		font-family: Lato, 'Liberation Sans', sans-serif;
		font-size: 28px;
		letter-spacing: -0.15px;
	}

	.corner,
	.ch,
	.rn {
		background: #f5f5f5;
		color: #666;
		font-family: 'Open Sans', sans-serif;
		font-size: 13px;
		letter-spacing: 0;
		display: flex;
		align-items: center;
		justify-content: center;
		box-sizing: border-box;
	}

	.corner {
		justify-content: flex-end;
		align-items: flex-end;
		padding: 0 4px 4px 0;
		border-bottom: 2px solid #aaa;
		border-right: 2px solid #d0d0d0;
	}

	.ch {
		border-bottom: 2px solid #aaa;
		border-right: 1px solid #ddd;
	}

	.ch.on {
		background: #c6e7d6;
		border-bottom-color: #1e7145;
		color: #1e6b42;
	}

	.rn {
		border-right: 2px solid #d0d0d0;
		padding-bottom: 2px;
		font-size: 14.500px;
		color: #777;
	}

	.rn.on {
		background: #c6e7d6;
		border-right-color: #1e7145;
		color: #1e6b42;
	}

	.c {
		box-sizing: border-box;
		border-right: 1px solid #dcdcdc;
		border-bottom: 2px solid #e2e2e2;
		display: flex;
		align-items: flex-end;
		line-height: 34px;
		white-space: nowrap;
		min-width: 0;
		position: relative;
		-webkit-text-stroke: 0.45px #111;
	}

	.c.thin {
		-webkit-text-stroke: 0;
	}

	.left {
		padding-left: 3.500px;
	}

	.ind {
		padding-left: 19px;
	}

	.c.tight {
		letter-spacing: -0.5px;
	}

	.right {
		justify-content: flex-end;
		padding-right: 6px;
		letter-spacing: -1px;
	}

	.right.pad {
		padding-right: 13px;
	}

	.acc {
		justify-content: space-between;
		padding: 0 13px 0 13px;
		letter-spacing: -1px;
		-webkit-text-stroke: 0;
	}

	.red {
		color: #e01010;
		-webkit-text-stroke-color: #e01010;
	}

	.total::before {
		content: '';
		position: absolute;
		left: 0;
		right: 0;
		top: -1px;
		height: 2px;
		background: #111;
	}

	.total {
		border-bottom: 5px double #222;
	}

	.yellow,
	.orange {
		border-color: transparent;
	}

	.yellow {
		background: #fffb2e;
	}

	.orange {
		background: #fbb726;
	}

	.tnr {
		font-family: 'Liberation Serif', serif;
		font-size: 30px;
		letter-spacing: 0;
		line-height: 31px;
	}

	.sel {
		box-shadow: inset 0 0 0 1px #1e7145, inset 0 0 0 3px #fff;
	}

	.sel::after {
		content: '';
		position: absolute;
		right: -3px;
		bottom: -3px;
		width: 5px;
		height: 5px;
		background: #1e7145;
		border: 1px solid #fff;
	}

	.cursor {
		position: absolute;
		left: 874px;
		top: 45px;
	}

	.mouse {
		position: absolute;
		left: 1057px;
		bottom: 0;
	}
</style>
